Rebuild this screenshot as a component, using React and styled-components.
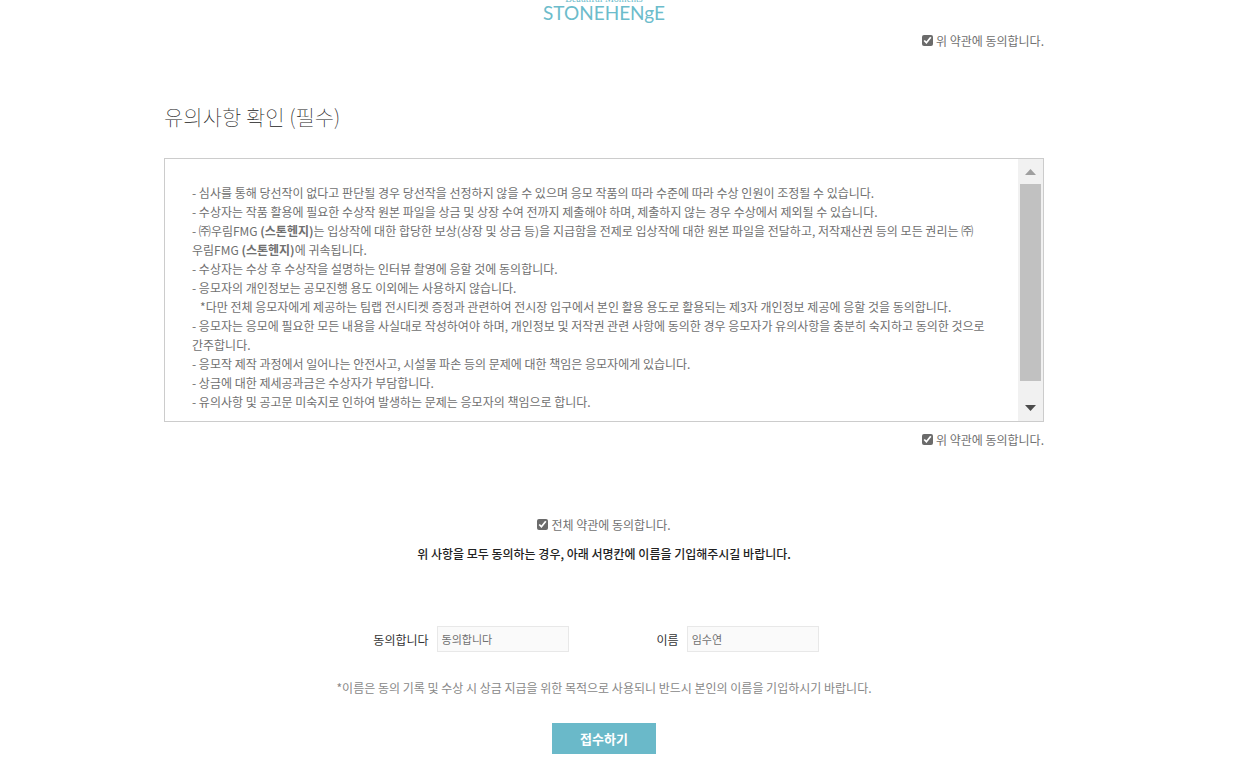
import React, { useState } from "react";
import styled, { createGlobalStyle } from "styled-components";

const Company = () => (
  <>
    ㈜<StyledCompany>우림FMG</StyledCompany> <strong>(스톤헨지)</strong>
  </>
);

const Agree = ({ id, children }) => {
  const [checked, setChecked] = useState(true);
  return (
    <StyledAgree htmlFor={id}>
      <StyledCheckbox
        id={id}
        type="checkbox"
        checked={checked}
        onChange={() => setChecked(!checked)}
      />
      {children}
    </StyledAgree>
  );
};

const App = () => {
  const [agree, setAgree] = useState("동의합니다");
  const [name, setName] = useState("임수연");

  return (
    <StyledPage>
      <GlobalStyle />
      <StyledMain>
        <StyledLogo>
          <StyledSlogan>Beautiful Moments</StyledSlogan>
          <StyledBrand>STONEHENgE</StyledBrand>
        </StyledLogo>
        <StyledRight>
          <Agree id="privacy">위 약관에 동의합니다.</Agree>
        </StyledRight>

        <StyledTitle>유의사항 확인 (필수)</StyledTitle>
        <StyledBox>
          <StyledNotices>
            {NOTICES.map((notice, i) => (
              <li key={i}>{notice}</li>
            ))}
          </StyledNotices>
          <StyledScrollbar aria-hidden="true">
            <StyledArrow viewBox="0 0 25 25">
              <path d="M7 16h11l-5.500-6z" fill="#9f9f9f" />
            </StyledArrow>
            <StyledTrack>
              <StyledThumb />
            </StyledTrack>
            <StyledArrow viewBox="0 0 25 25">
              <path d="M7 9h11l-5.500 6z" fill="#4c4c4c" />
            </StyledArrow>
          </StyledScrollbar>
        </StyledBox>
        <StyledRight>
          <Agree id="notice">위 약관에 동의합니다.</Agree>
        </StyledRight>

        <StyledForm onSubmit={(e) => e.preventDefault()}>
          <Agree id="all">전체 약관에 동의합니다.</Agree>
          <StyledGuide>
            위 사항을 모두 동의하는 경우, 아래 서명칸에 이름을 기입해주시길
            바랍니다.
          </StyledGuide>
          <StyledFields>
            <StyledField>
              <label htmlFor="sign">동의합니다</label>
              <StyledInput
                id="sign"
                value={agree}
                onChange={(e) => setAgree(e.target.value)}
              />
            </StyledField>
            <StyledField>
              <label htmlFor="name">이름</label>
              <StyledInput
                id="name"
                value={name}
                onChange={(e) => setName(e.target.value)}
              />
            </StyledField>
          </StyledFields>
          <StyledNote>
            *이름은 동의 기록 및 수상 시 상금 지급을 위한 목적으로 사용되니
            반드시 본인의 이름을 기입하시기 바랍니다.
          </StyledNote>
          <StyledSubmit type="submit">접수하기</StyledSubmit>
        </StyledForm>
      </StyledMain>
    </StyledPage>
  );
};

export default App;

const NOTICES = [
  "- 심사를 통해 당선작이 없다고 판단될 경우 당선작을 선정하지 않을 수 있으며 응모 작품의 따라 수준에 따라 수상 인원이 조정될 수 있습니다.",
  "- 수상자는 작품 활용에 필요한 수상작 원본 파일을 상금 및 상장 수여 전까지 제출해야 하며, 제출하지 않는 경우 수상에서 제외될 수 있습니다.",
  <>
    - <Company />는 입상작에 대한 합당한 보상(상장 및 상금 등)을 지급함을 전제로
    입상작에 대한 원본 파일을 전달하고, 저작재산권 등의 모든 권리는 <Company />에
    귀속됩니다.
  </>,
  "- 수상자는 수상 후 수상작을 설명하는 인터뷰 촬영에 응할 것에 동의합니다.",
  "- 응모자의 개인정보는 공모진행 용도 이외에는 사용하지 않습니다.",
  "\u00a0\u00a0 *다만 전체 응모자에게 제공하는 팀랩 전시티켓 증정과 관련하여 전시장 입구에서 본인 활용 용도로 활용되는 제3자 개인정보 제공에 응할 것을 동의합니다.",
  "- 응모자는 응모에 필요한 모든 내용을 사실대로 작성하여야 하며, 개인정보 및 저작권 관련 사항에 동의한 경우 응모자가 유의사항을 충분히 숙지하고 동의한 것으로 간주합니다.",
  "- 응모작 제작 과정에서 일어나는 안전사고, 시설물 파손 등의 문제에 대한 책임은 응모자에게 있습니다.",
  "- 상금에 대한 제세공과금은 수상자가 부담합니다.",
  "- 유의사항 및 공고문 미숙지로 인하여 발생하는 문제는 응모자의 책임으로 합니다.",
];

const GlobalStyle = createGlobalStyle`
  * {
    box-sizing: border-box;
  }

  body {
    margin: 0;
    background-color: white;
    color: #707070;
    font-family: "Noto Sans CJK KR", "Noto Sans", sans-serif;
    font-size: 12px;
    line-height: 19px;
  }
`;

const StyledPage = styled.div`
  padding: 0 39px 27px 0;
`;

const StyledMain = styled.main`
  max-width: 880px;
  margin: 0 auto;
`;

const StyledLogo = styled.div`
  display: flex;
  flex-direction: column;
  align-items: center;
  justify-content: flex-end;
  height: 23px;
  overflow: hidden;
  color: #6cbccb;
`;

const StyledSlogan = styled.div`
  flex: none;
  font-family: "Liberation Serif", serif;
  font-size: 10px;
  line-height: 8px;
`;

const StyledBrand = styled.div`
  flex: none;
  font-family: Lato, sans-serif;
  font-size: 19px;
  line-height: 20px;
`;

const StyledRight = styled.div`
  display: flex;
  justify-content: flex-end;
  margin-top: 8px;
`;

const StyledAgree = styled.label`
  display: flex;
  align-items: center;
  gap: 3px;
`;

const StyledCheckbox = styled.input`
  width: 11px;
  height: 11px;
  margin: 0;
  accent-color: #6b6b6b;
`;

const StyledTitle = styled.h1`
  margin: 50px 0 26px;
  color: #222;
  font-size: 21px;
  font-weight: 100;
  line-height: 32px;
`;

const StyledBox = styled.div`
  display: flex;
  border: 1px solid #ccc;
`;

const StyledNotices = styled.ul`
  flex: 1;
  margin: 0;
  padding: 24px 27px 10px;
  list-style: none;
`;

const StyledCompany = styled.span`
  white-space: nowrap;
`;

const StyledScrollbar = styled.div`
  display: flex;
  flex-direction: column;
  width: 25px;
  background-color: #f1f1f1;
`;

const StyledArrow = styled.svg`
  flex: none;
  width: 25px;
  height: 25px;
`;

const StyledTrack = styled.div`
  flex: 1;
  padding: 0 2px;
`;

const StyledThumb = styled.div`
  height: 93%;
  background-color: #c1c1c1;
`;

const StyledForm = styled.form`
  display: flex;
  flex-direction: column;
  align-items: center;
  margin-top: 66px;
`;

const StyledGuide = styled.p`
  margin: 10px 0 0;
  color: #222;
  font-weight: 500;
`;

const StyledFields = styled.div`
  display: flex;
  gap: 88px;
  margin: 63px 16px 0 0;
  color: #333;
`;

const StyledField = styled.div`
  display: flex;
  align-items: center;
  gap: 8px;
`;

const StyledInput = styled.input`
  width: 132px;
  height: 26px;
  padding: 0 4px;
  border: 1px solid #e8e8e8;
  background-color: #fafafa;
  color: #707070;
  font-family: inherit;
  font-size: 11px;
`;

const StyledNote = styled.p`
  margin: 26px 0;
  color: #888;
`;

const StyledSubmit = styled.button`
  width: 104px;
  height: 31px;
  padding: 0;
  border: 0;
  background-color: #6ab9c9;
  color: white;
  font-family: inherit;
  font-size: 13px;
  font-weight: 700;
`;
